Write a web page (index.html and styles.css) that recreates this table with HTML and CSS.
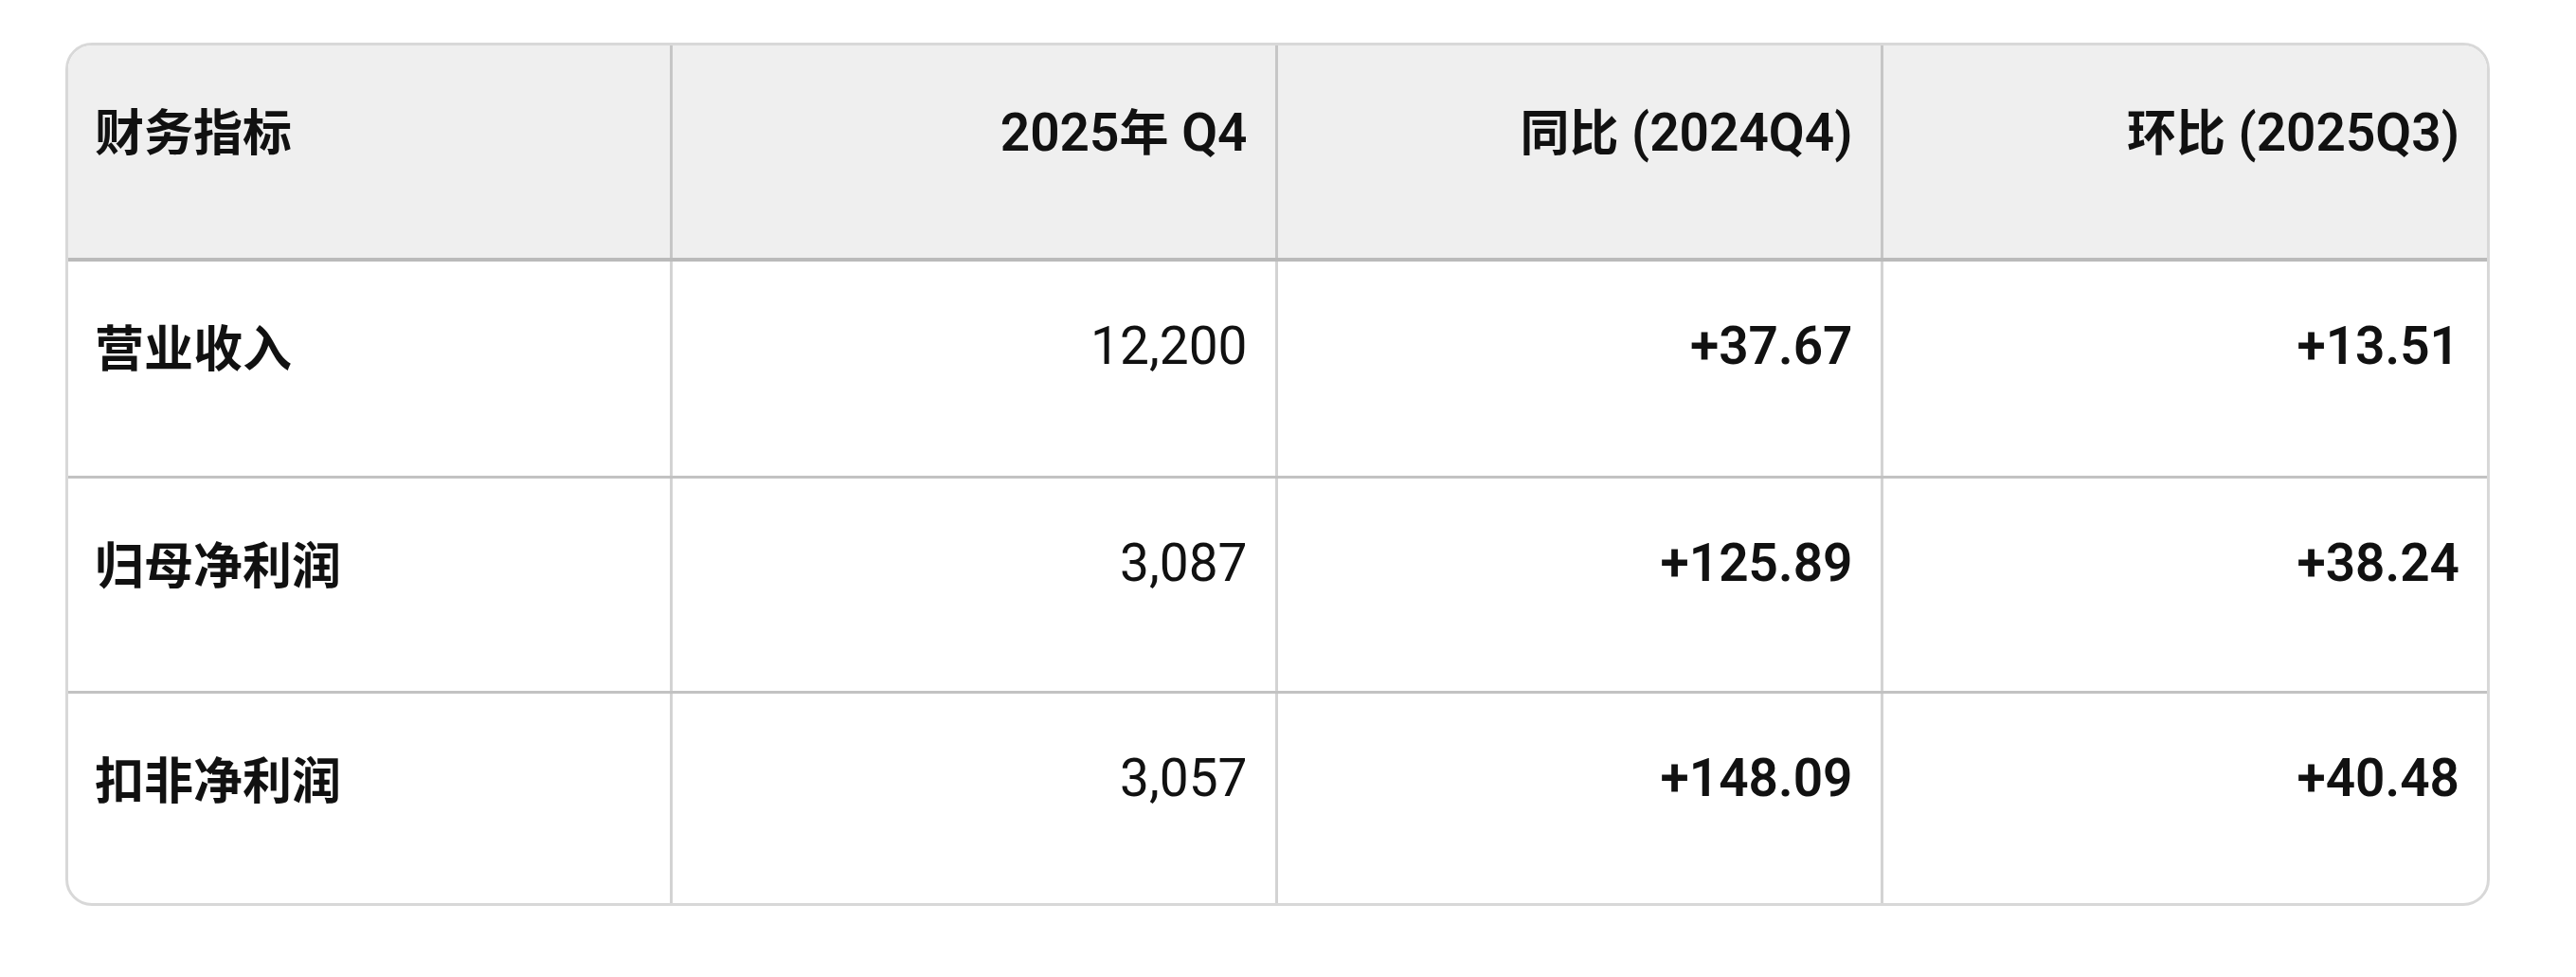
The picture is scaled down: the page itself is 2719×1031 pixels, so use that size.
FILE: index.html
```html
<!DOCTYPE html>
<html lang="zh-CN">
<head>
<meta charset="utf-8">
<title>财务指标</title>
<link rel="stylesheet" href="styles.css">
</head>
<body>
<div class="table-wrap">
  <table class="fin-table">
    <colgroup>
      <col class="c-first">
      <col class="c-data">
      <col class="c-data">
      <col class="c-data">
    </colgroup>
    <thead>
      <tr>
        <th class="col-name"><span class="zh">财务指标</span></th>
        <th class="num">2025<span class="zh">年</span> Q4</th>
        <th class="num"><span class="zh">同比</span> (2024Q4)</th>
        <th class="num"><span class="zh">环比</span> (2025Q3)</th>
      </tr>
    </thead>
    <tbody>
      <tr class="r1">
        <td class="col-name"><span class="zh">营业收入</span></td>
        <td class="num">12,200</td>
        <td class="num strong">+37.67</td>
        <td class="num strong">+13.51</td>
      </tr>
      <tr class="r2">
        <td class="col-name"><span class="zh">归母净利润</span></td>
        <td class="num">3,087</td>
        <td class="num strong">+125.89</td>
        <td class="num strong">+38.24</td>
      </tr>
      <tr class="r3">
        <td class="col-name"><span class="zh">扣非净利润</span></td>
        <td class="num">3,057</td>
        <td class="num strong">+148.09</td>
        <td class="num strong">+40.48</td>
      </tr>
    </tbody>
  </table>
</div>
</body>
</html>
```
FILE: styles.css
```css
html, body {
  margin: 0;
  padding: 0;
  background: #ffffff;
}

body {
  font-family: "Roboto", "Noto Sans CJK SC", sans-serif;
  color: #111111;
}

.table-wrap {
  margin: 45px 0 0 69px;
  width: 2553px;
  border: 3px solid #d8d8d8;
  border-radius: 28px;
  overflow: hidden;
}

.fin-table {
  width: 100%;
  border-collapse: collapse;
  table-layout: fixed;
}

.c-first {
  width: 636px;
}

.fin-table th,
.fin-table td {
  box-sizing: border-box;
  font-size: 55px;
  line-height: 78px;
  padding: 50px 29px 0 28px;
  vertical-align: top;
  text-align: left;
  border-left: 3px solid #d3d3d3;
  white-space: nowrap;
}

.fin-table th:first-child,
.fin-table td:first-child {
  border-left: none;
  padding-left: 28px;
}

.zh {
  font-family: "Noto Sans CJK SC", sans-serif;
  font-size: 52px;
  font-weight: 700;
}

.fin-table thead th {
  background: #efefef;
  font-weight: 600;
  height: 226px;
  border-bottom: 4px solid #bababa;
}

.fin-table thead th:not(:first-child) {
  border-left-color: #c6c6c6;
}

.fin-table tbody tr.r1 td {
  height: 229px;
  border-bottom: 3px solid #c2c2c2;
}

.fin-table tbody tr.r2 td {
  height: 227px;
  border-bottom: 3px solid #c2c2c2;
}

.fin-table tbody tr.r3 td {
  height: 223px;
}

.fin-table .num {
  text-align: right;
  font-weight: 400;
}

.fin-table thead .num {
  font-weight: 600;
}

.fin-table .strong {
  font-weight: 600;
}
```
